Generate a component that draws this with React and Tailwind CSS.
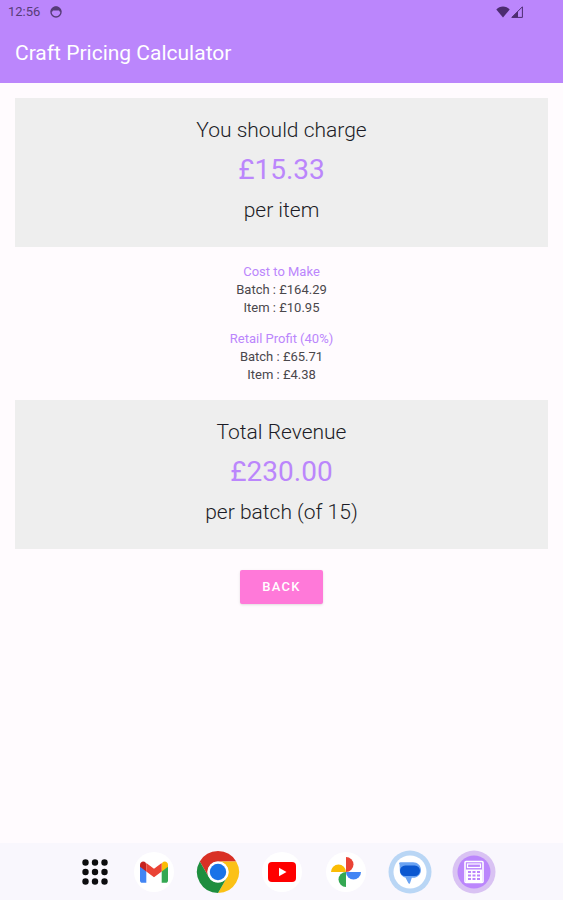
const StatusBar = () => {
    return (
        <div className="flex h-6 items-center pl-2 pr-10 text-[#573c78]">
            <span className="text-[13px] leading-6">12:56</span>
            <svg viewBox="0 0 12 12" className="ml-2.5 size-3" aria-hidden="true">
                <circle cx="6" cy="6" r="5" fill="none" stroke="currentColor" strokeWidth="1.4" />
                <path d="M.6 5.500C1 2.500 3 .5 6 .5s5 2 5.400 5L9.800 5.800 9 4.600H3L2.200 5.800z" fill="currentColor" />
            </svg>
            <div className="ml-auto flex items-center gap-px text-[#4c2c70]">
                <svg viewBox="0 0 14 12" className="h-3 w-3.5" aria-hidden="true">
                    <path d="M7 11.500.3 3.600C2 1.700 4.400.6 7 .6s5 1.100 6.700 3z" fill="currentColor" />
                </svg>
                <svg viewBox="0 0 12 12" className="size-3" aria-hidden="true">
                    <path d="M11.400.8V11.400H.8z" fill="none" stroke="currentColor" strokeWidth="1" />
                    <path d="M7 5.200V11.400H.8z" fill="currentColor" />
                </svg>
            </div>
        </div>
    );
};

const SummaryCard = ({ title, amount, unit }) => {
    return (
        <section className="bg-[#eeeeee] pt-4 pb-[21px] text-center text-[#1c1c26]">
            <h2 className="text-[21px] leading-8 font-light">{title}</h2>
            <p className="text-[28px] leading-12 text-[#bb86fc]">{amount}</p>
            <p className="text-[21px] leading-8 font-light">{unit}</p>
        </section>
    );
};

const Breakdown = ({ title, batch, item }) => {
    return (
        <section className="text-center text-[13px] leading-[18px] text-[#4a474c]">
            <h3 className="text-[#bb86fc]">{title}</h3>
            <p>Batch : {batch}</p>
            <p>Item : {item}</p>
        </section>
    );
};

const AppsIcon = () => (
    <svg viewBox="0 0 26 26" className="ml-2.5 size-[26px]" fill="#0c0c0e" aria-hidden="true">
        <circle cx="3.500" cy="3.500" r="3.200" />
        <circle cx="13" cy="3.500" r="3.200" />
        <circle cx="22.500" cy="3.500" r="3.200" />
        <circle cx="3.500" cy="13" r="3.200" />
        <circle cx="13" cy="13" r="3.200" />
        <circle cx="22.500" cy="13" r="3.200" />
        <circle cx="3.500" cy="22.500" r="3.200" />
        <circle cx="13" cy="22.500" r="3.200" />
        <circle cx="22.500" cy="22.500" r="3.200" />
    </svg>
);

const GmailIcon = () => (
    <svg viewBox="0 0 44 44" className="size-11" aria-hidden="true">
        <circle cx="22" cy="22" r="20" fill="#fff" />
        <path d="M8 15v15.500c0 1.400 1 2.300 2.300 2.300h4V20z" fill="#4285f4" />
        <path d="M36 15v15.500c0 1.400-1 2.300-2.300 2.300h-4V20z" fill="#34a853" />
        <path d="M29.700 14.200V21.500L36 16.800v-2.100c0-2.800-3-4.200-5.200-2.700z" fill="#fbbc04" />
        <path d="M14.300 14.200V21.500L8 16.800v-2.100c0-2.800 3-4.200 5.200-2.700z" fill="#c5221f" />
        <path d="M14.300 21.500v-8.600L22 18.700l7.700-5.800v8.600L22 27.300z" fill="#ea4335" />
    </svg>
);

const ChromeIcon = () => (
    <svg viewBox="0 0 44 44" className="size-11" aria-hidden="true">
        <path d="M3.800 11.500A21 21 0 0 1 40.200 11.500H22A10.500 10.500 0 0 0 12.900 27.250z" fill="#d93025" />
        <path d="M40.200 11.500A21 21 0 0 1 22 43L31.100 27.250A10.500 10.500 0 0 0 22 11.500z" fill="#fbc116" />
        <path d="M22 43A21 21 0 0 1 3.800 11.500L12.900 27.250A10.500 10.500 0 0 0 31.100 27.250z" fill="#1e8e3e" />
        <circle cx="22" cy="22" r="10.500" fill="#fff" />
        <circle cx="22" cy="22" r="8.200" fill="#1a73e8" />
    </svg>
);

const YoutubeIcon = () => (
    <svg viewBox="0 0 44 44" className="size-11" aria-hidden="true">
        <circle cx="22" cy="22" r="20" fill="#fff" />
        <rect x="8" y="12" width="28" height="20" rx="4" fill="#f00" />
        <path d="M19 17.700v8.600l7.500-4.300z" fill="#fff" />
    </svg>
);

const PhotosIcon = () => (
    <svg viewBox="0 0 44 44" className="size-11" aria-hidden="true">
        <circle cx="22" cy="22" r="20" fill="#fff" />
        <path d="M22 7a7.500 7.500 0 0 1 0 15z" fill="#ea4335" />
        <path d="M37 22a7.500 7.500 0 0 1-15 0z" fill="#4285f4" />
        <path d="M22 37a7.500 7.500 0 0 1 0-15z" fill="#34a853" />
        <path d="M7 22a7.500 7.500 0 0 1 15 0z" fill="#fbbc04" />
    </svg>
);

const MessagesIcon = () => (
    <svg viewBox="0 0 44 44" className="size-11" aria-hidden="true">
        <circle cx="22" cy="22" r="21.500" fill="#b9d6f5" />
        <circle cx="22" cy="22" r="16.500" fill="#fff" />
        <path d="M11.500 14.500c-.9-1-.3-2.300 1-2.300H25c4.500 0 8 3.300 8 7.800s-3.500 7.800-8 7.800h-1.200l-1.800 5.400c-.3.700-1.200.7-1.600.1l-3-5.700c-3.400-.8-5.600-3.800-5.600-7.300 0-2.100-.1-3.700-.3-5.800z" fill="#6aa3f3" />
        <rect x="12" y="15.500" width="20" height="10.500" rx="5.200" fill="#0b57d0" />
    </svg>
);

const CalculatorIcon = () => (
    <svg viewBox="0 0 44 44" className="size-11" aria-hidden="true">
        <circle cx="22" cy="22" r="21.500" fill="#d9c2f3" />
        <circle cx="22" cy="22" r="16.500" fill="#bb86fc" />
        <rect x="13" y="11.500" width="18" height="21" rx="1" fill="#bb86fc" stroke="#fff" strokeWidth="1.600" />
        <rect x="15.500" y="14" width="13" height="3.500" fill="none" stroke="#fff" strokeWidth="1.200" />
        <path d="M14 19.500h16V32H14z" fill="#fff" />
        <path d="M16 22h3M20.500 22h3M25 22h3M16 25.500h3M20.500 25.500h3M25 25.500h3M16 29h3M20.500 29h3M25 29h3" stroke="#bb86fc" strokeWidth="1.900" />
    </svg>
);

const dockApps = [
    { name: "All apps", Icon: AppsIcon },
    { name: "Gmail", Icon: GmailIcon },
    { name: "Chrome", Icon: ChromeIcon },
    { name: "YouTube", Icon: YoutubeIcon },
    { name: "Photos", Icon: PhotosIcon },
    { name: "Messages", Icon: MessagesIcon },
    { name: "Craft Pricing Calculator", Icon: CalculatorIcon },
];

const App = () => {
    return (
        <div className="flex min-h-screen flex-col bg-[#fffbfe] font-['Roboto',sans-serif]">
            <header className="bg-[#bb86fc]">
                <StatusBar />
                <div className="flex h-[59px] items-center px-[15px]">
                    <h1 className="text-[21px] text-white">Craft Pricing Calculator</h1>
                </div>
            </header>

            <main className="flex flex-1 flex-col gap-4 px-[15px] pt-[15px] pb-4">
                <SummaryCard title="You should charge" amount="£15.33" unit="per item" />
                <div className="flex flex-col gap-[13px]">
                    <Breakdown title="Cost to Make" batch="£164.29" item="£10.95" />
                    <Breakdown title="Retail Profit (40%)" batch="£65.71" item="£4.38" />
                </div>
                <SummaryCard title="Total Revenue" amount="£230.00" unit="per batch (of 15)" />
                <button
                    type="button"
                    className="mt-[5px] self-center rounded-xs bg-[#ff79d9] px-[22px] py-2 text-[13px] leading-[18px] font-medium tracking-widest text-white shadow-sm"
                >
                    BACK
                </button>
            </main>

            <nav className="flex h-[57px] justify-center bg-[#f9f7fd]" aria-label="Dock">
                {dockApps.map(({ name, Icon }) => (
                    <button key={name} type="button" aria-label={name} className="flex w-16 items-center justify-center">
                        <Icon />
                    </button>
                ))}
            </nav>
        </div>
    );
};

export default App;
